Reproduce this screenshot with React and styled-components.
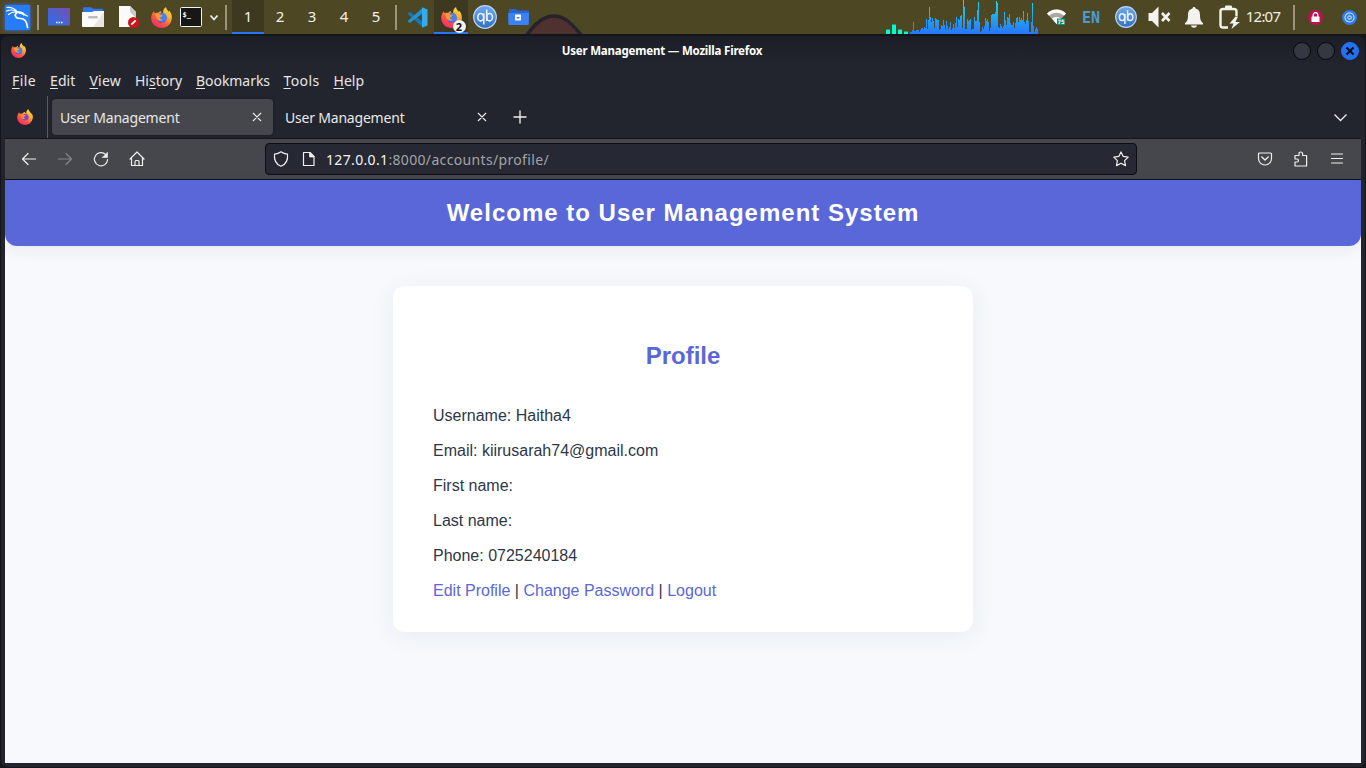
import React from "react";
import styled, { createGlobalStyle, css } from "styled-components";

const ui = `"Noto Sans", "Open Sans", sans-serif`;

const GlobalStyle = createGlobalStyle`
  * { box-sizing: border-box; }
  html, body { margin: 0; height: 100%; overflow: hidden; background: #14161c; }
  svg { display: block; flex: none; overflow: visible; }
`;

const Desktop = styled.div`
  width: 1366px;
  height: 768px;
  display: flex;
  flex-direction: column;
  background: #14151b;
  font-family: ${ui};
  overflow: hidden;
`;

/* ---------- desktop panel ---------- */

const Panel = styled.header`
  position: relative;
  height: 34px;
  flex: none;
  display: flex;
  align-items: stretch;
  overflow: hidden;
  background: #4e4724;
`;

const Wallpaper = styled.svg`
  position: absolute;
  left: 519px;
  top: 0;
`;

const Slot = styled.div`
  width: ${(p) => p.$w}px;
  flex: none;
  display: flex;
  align-items: center;
  justify-content: center;
  ${(p) =>
    p.$active &&
    css`
      background: #3d3820;
      box-shadow: inset 0 -2px #2777ff;
    `}
`;

const Rule = styled.i`
  width: 2px;
  height: 25px;
  background: #9b967f;
`;

const Workspace = styled(Slot)`
  color: #f2f0e8;
  font-size: 15px;
  padding-bottom: 2px;
`;

const Spacer = styled.div`
  flex: 1;
`;

const Language = styled.span`
  font: bold 15px "DejaVu Sans Mono", monospace;
  padding-top: 1px;
  color: #4a9ad4;
`;

const Clock = styled.span`
  font-size: 15px;
  letter-spacing: -0.8px;
  padding-bottom: 2px;
  color: #f2f0e8;
`;

/* ---------- browser window ---------- */

const Window = styled.main`
  width: 1364px;
  height: 731px;
  margin: 2px 0 0 1px;
  padding: 0 4px 4px;
  display: flex;
  flex-direction: column;
  background: #23252e;
  border-radius: 7px;
  overflow: hidden;
`;

const TitleBar = styled.div`
  height: 29px;
  flex: none;
  display: grid;
  grid-template-columns: 100px 1fr 100px;
  align-items: center;
  margin: 0 -4px;
  padding: 0 6px 0 10px;
  background: linear-gradient(#1c1e27, #23252e);
`;

const WindowTitle = styled.h1`
  margin: 0 46px 0 0;
  text-align: center;
  color: #fff;
  font-size: 11.5px;
  font-weight: 700;
  letter-spacing: -0.2px;
`;

const WindowButtons = styled.div`
  display: flex;
  justify-content: flex-end;
  gap: 6px;
`;

const WindowButton = styled.span`
  width: 18px;
  height: 18px;
  border-radius: 50%;
  border: 1px solid #07080a;
  background: ${(p) => (p.$close ? "#2371f3" : "#343843")};
  ${(p) => p.$close && "border-color: #2371f3;"}
  display: grid;
  place-items: center;
`;

const MenuBar = styled.nav`
  height: 31px;
  flex: none;
  display: flex;
  align-items: center;
  padding-left: 7px;
`;

const MenuItem = styled.span`
  width: ${(p) => p.$w}px;
  flex: none;
  white-space: nowrap;
  color: #e6e6e6;
  font-size: 14px;
  letter-spacing: ${(p) => p.$ls}px;
  u { text-underline-offset: 2px; }
`;

const TabStrip = styled.div`
  height: 43px;
  flex: none;
  display: flex;
  align-items: stretch;
  border-bottom: 1px solid #15161c;
`;

const PinnedTab = styled.div`
  width: 43px;
  border-right: 1px solid #5b5d64;
  display: flex;
  align-items: center;
  justify-content: center;
  padding: 0 2px 1px 0;
`;

const Tab = styled.div`
  width: 221px;
  height: 36px;
  margin: 3px 0 0 4px;
  padding: 0 11px 0 8px;
  display: flex;
  align-items: center;
  justify-content: space-between;
  border-radius: 4px;
  color: #e9e9e7;
  font-size: 14px;
  letter-spacing: -0.2px;
  background: ${(p) => (p.$active ? "#45474d" : "transparent")};
  box-shadow: ${(p) => (p.$active ? "0 0 3px rgba(0,0,0,.35)" : "none")};
`;

const TabButton = styled.div`
  width: ${(p) => p.$w || 40}px;
  display: flex;
  align-items: center;
  justify-content: center;
`;

const ToolBar = styled.div`
  height: 41px;
  flex: none;
  display: flex;
  align-items: center;
  background: #45474d;
  border-bottom: 1px solid #101116;
  padding-left: 6px;
`;

const ToolButton = styled.div`
  width: ${(p) => p.$w || 36}px;
  display: flex;
  justify-content: center;
`;

const AddressBar = styled.div`
  width: 872px;
  height: 32px;
  margin-left: 110px;
  padding: 0 7px;
  display: flex;
  align-items: center;
  background: #262833;
  border: 1px solid #0d0e12;
  border-radius: 4px;
`;

const Address = styled.span`
  flex: 1;
  color: #a3a4a8;
  font-size: 14px;
  letter-spacing: 0.34px;
  b { font-weight: 400; color: #f4f4f4; }
`;

const TrailingTools = styled.div`
  margin-left: auto;
  margin-right: 6px;
  display: flex;
`;

/* ---------- page ---------- */

const Page = styled.div`
  flex: 1;
  background: #f7f9fc;
  color: #2d3748;
  font: 16px "Liberation Sans", Arial, sans-serif;
`;

const Banner = styled.h1`
  height: 66px;
  margin: 0;
  display: flex;
  align-items: center;
  justify-content: center;
  background: #5a67d8;
  border-radius: 0 0 12px 12px;
  box-shadow: 0 4px 16px rgba(44, 62, 80, 0.07);
  color: #fff;
  font-size: 24px;
  letter-spacing: 1px;
`;

const Card = styled.section`
  width: 580px;
  height: 346px;
  margin: 40px auto 0;
  padding: 55px 40px 0;
  background: #fff;
  border-radius: 12px;
  box-shadow: 0 4px 24px rgba(44, 82, 130, 0.08);
`;

const CardTitle = styled.h2`
  margin: 0 0 28px;
  text-align: center;
  color: #5a67d8;
  font-size: 24px;
  line-height: 29px;
`;

const Field = styled.p`
  margin: 0;
  line-height: 35px;
`;

const Link = styled.span`
  color: #5a67d8;
`;

/* ---------- drawings ---------- */

const Firefox = ({ size }) => (
  <svg width={size} height={size} viewBox="0 0 24 24">
    <defs>
      <linearGradient id="fxBody" x1=".85" y1=".1" x2=".25" y2=".95">
        <stop offset="0" stopColor="#ffdf43" />
        <stop offset=".35" stopColor="#ffa42e" />
        <stop offset=".65" stopColor="#ff5a42" />
        <stop offset="1" stopColor="#f02c68" />
      </linearGradient>
    </defs>
    <path fill="url(#fxBody)" d="M3.4 4.8c.1 1 .4 1.800 1 2.400C5.500 6.600 7 6.500 8.100 6.900 9 5.500 10 4.800 11.500 4.500c-.5.800-.5 1.400-.3 1.900L14 7C13.500 4.300 14.500 1.500 17.200 0c.2 2.700 1.800 3.800 3.100 5.500.3-.4.300-.8.200-1.400C23 6.500 24 9.500 23.800 12.500 23.500 19 18.300 24 12 24S.2 19 .2 12.500c0-3 1.200-5.900 3.200-7.700z" />
    <circle cx="12.300" cy="12.500" r="5.600" fill="#6a4be0" />
    <path fill="#3f83f5" d="M8 10c2-3 6-4 8.600-1.800 2.200 2.200 1.700 6.300-.7 8.100-3 1.600-6.300.3-7.500-2.200z" />
    <path fill="#ff9a30" d="M4.500 8.500c2.300-1.800 4.800-1.200 6.500.4l2.300.5c-.3 1.500-1.800 2-3 2.300-.5 1.700 1 2.800 3 2.500-1.500 2-4.300 1.800-5.800.3-1.600-1.500-1.400-4-3-6z" />
  </svg>
);

const FirefoxNightTab = () => (
  <svg width="16" height="16" viewBox="0 0 24 24">
    <path fill="url(#fxBody)" d="M3.400 4.800c.1 1 .4 1.800 1 2.400C5.500 6.600 7 6.500 8.100 6.900 9 5.500 10 4.800 11.500 4.500L14 7C13.500 4.300 14.500 1.500 17.200 0c.2 2.700 1.800 3.800 3.100 5.500C23 7.500 24 9.500 23.800 12.500 23.500 19 18.300 24 12 24S.2 19 .2 12.500c0-3 1.200-5.900 3.200-7.700z" />
    <circle cx="12.500" cy="12.200" r="4.800" fill="#7a43df" />
    <path fill="#ff8b35" d="M5 8.500c2.300-1.800 4.800-1.200 6.500.4l1.800.5c-.3 1.500-1.800 2-3 2.300-.5 1.700 1 2.400 2.500 2.100-1.500 2-4 1.800-5.300.3C6 12.500 6.500 10.500 5 8.500z" />
  </svg>
);

const Kali = () => (
  <svg width="25" height="25" viewBox="0 0 25 25">
    <rect width="25" height="25" rx="1" fill="#267dfb" style={{ filter: "drop-shadow(0 0 2px #2a73ff)" }} />
    <g fill="none" stroke="#fff" strokeLinecap="round">
      <path d="M2 2.500c4.500-.3 8 1.300 10.500 4.500M1.500 6c4-1.500 8-1.300 11 1M3.500 9.500c2.500-2 5.500-2.700 8.500-2.500" strokeWidth="1.200" />
      <path d="M12 7.500c-3.500 2.500-1.500 6 3 6 4.500-.2 7 3 7.500 9" strokeWidth="1.700" />
      <path d="M12 7c3-.4 6 .3 7.500 2.500l2.800 1.500M14 8c2.500 0 4 .5 5 2" strokeWidth="1.400" />
    </g>
  </svg>
);

const DesktopIcon = () => (
  <svg width="22" height="18" viewBox="0 0 22 18">
    <defs>
      <linearGradient id="desk" x1="0" y1="1" x2="1" y2="0">
        <stop offset=".25" stopColor="#3a68e0" />
        <stop offset="1" stopColor="#7b4fae" />
      </linearGradient>
    </defs>
    <rect width="22" height="17.500" rx="1" fill="url(#desk)" />
    <path d="M8 14.500h1.500m1 0h1.500m1 0h1.500" stroke="#fff" strokeWidth="1.500" />
  </svg>
);

const Files = () => (
  <svg width="22" height="20" viewBox="0 0 22 20">
    <path d="M1 7V1.500Q1 .3 2 .3h7l2 1.500h9q1 0 1 1V7z" fill="#2f78ea" />
    <path d="M0 5h10l2-1h10v15q0 1-1 1H1q-1 0-1-1z" fill="#fbfbfb" />
    <path d="M22 5v14q0 1-1 1H11z" fill="#e6e6e6" />
    <rect x="6" y="9" width="10" height="2.500" rx="1.200" fill="#bdbdbd" />
  </svg>
);

const Editor = () => (
  <svg width="20" height="22" viewBox="0 0 20 22">
    <path d="M0 0h11l6 6v15H0z" fill="#fafafa" />
    <path d="M11 0l6 6v6l-6-6z" fill="#c9c9c9" />
    <circle cx="14.500" cy="16.500" r="5.500" fill="#d0141c" />
    <path d="M12.300 18.700l4.400-4.400" stroke="#fff" strokeWidth="1.800" />
  </svg>
);

const Terminal = () => (
  <svg width="22" height="20" viewBox="0 0 22 20">
    <rect x=".5" y=".5" width="21" height="19" rx="1" fill="#171717" stroke="#f2f2f2" />
    <text x="2.500" y="9.500" fill="#fff" fontFamily="DejaVu Sans Mono" fontWeight="700" fontSize="7">$_</text>
  </svg>
);

const Chevron = ({ w = 9, h = 5, stroke = 1.8, color = "#eee" }) => (
  <svg width={w} height={h} viewBox={`0 0 ${w} ${h}`}>
    <path d={`M.5 .5L${w / 2} ${h - 0.5}L${w - 0.5} .5`} fill="none" stroke={color} strokeWidth={stroke} />
  </svg>
);

const VsCode = () => (
  <svg width="21" height="21" viewBox="0 0 21 21">
    <path d="M.5 6.800L2.800 5 16 15v5.500z" fill="#1478bd" />
    <path d="M.5 14.200L2.800 16 16 6V.5z" fill="#2092d8" />
    <path d="M15 .3L20.500 2.500v16l-5.500 2.300z" fill="#35abec" />
  </svg>
);

const Torrent = ({ size }) => (
  <svg width={size} height={size} viewBox="0 0 24 24">
    <defs>
      <linearGradient id="qbt" x2="0" y2="1">
        <stop stopColor="#70aaf0" />
        <stop offset="1" stopColor="#326fc0" />
      </linearGradient>
    </defs>
    <circle cx="12" cy="12" r="11.300" fill="url(#qbt)" stroke="#bcd6f5" strokeWidth="1.200" />
    <g fill="none" stroke="#e7f1ff" strokeWidth="1.600">
      <ellipse cx="7.700" cy="12.200" rx="2.900" ry="3.700" />
      <path d="M10.800 8.500v11" />
      <path d="M13.700 4.500v11.500" />
      <ellipse cx="16.600" cy="12.200" rx="2.900" ry="3.700" />
    </g>
  </svg>
);

const BlueFolder = () => (
  <svg width="21" height="16" viewBox="0 0 21 16">
    <path d="M1 0h7l1.500 1.500H20q1 0 1 1V15q0 1-1 1H1.500q-1 0-1-1z" fill="#2866d8" />
    <path d="M0 4h21l-.5 11q0 1-1 1h-18q-1 0-1-1z" fill="#3b82f6" />
    <rect x="7" y="5.500" width="6" height="6" rx=".7" fill="#fff" />
    <path d="M8.700 8.700h2.800" stroke="#3b82f6" strokeWidth="1.500" />
  </svg>
);

const Count = styled.b`
  position: absolute;
  right: -4px;
  bottom: -5px;
  width: 13px;
  height: 13px;
  border-radius: 50%;
  background: #f4f4f4;
  color: #111;
  font-size: 11px;
  line-height: 13px;
  text-align: center;
`;

const Badged = styled.div`
  position: relative;
`;

const load = [
  2, 2, 4, 12, 3, 3, 4, 4, 4, 2, 4, 6, 6, 5, 7, 6, 15, 5, 14, 27, 17, 12, 16, 13, 6, 16, 15, 14, 14, 4, 5, 9, 8, 14,
  9, 5, 13, 8, 5, 7, 12, 4, 6, 10, 6, 11, 17, 7, 15, 14, 18, 19, 6, 34, 27, 5, 5, 15, 13, 14, 15, 4, 5, 5, 17, 13,
  13, 24, 32, 12, 2, 3, 7, 5, 8, 16, 13, 15, 12, 3, 6, 19, 20, 20, 20, 22, 33, 31, 7, 6, 10, 8, 6, 8, 22, 14, 9, 17,
  16, 20, 11, 9, 9, 12, 6, 11, 16, 17, 12, 17, 14, 16, 14, 23, 12, 10, 14, 21, 13, 2, 2, 12, 31, 8, 2, 5, 7, 5,
];

const LoadGraph = () => (
  <svg width="152" height="34" viewBox="0 0 152 34" shapeRendering="crispEdges">
    <defs>
      <linearGradient id="load" gradientUnits="userSpaceOnUse" x1="0" y1="0" x2="0" y2="34">
        <stop offset="0" stopColor="#12dcea" />
        <stop offset="1" stopColor="#2975ff" />
      </linearGradient>
    </defs>
    <path d="M0 30h4v4H0zM6 25h4v9H6zM12 30h4v4h-4zM18 32h4v2h-4z" fill="#00ffd0" />
    <path d="M0 29h4v1H0zM6 24h4v1H6zM12 29h4v1h-4zM18 31h4v1h-4z" fill="#2c9870" />
    <path fill="url(#load)" d={load.map((v, i) => `M${24 + i} 34v${-v}h1v${v}z`).join("")} />
  </svg>
);

const Wifi = () => (
  <svg width="20" height="17" viewBox="0 0 20 17">
    <path d="M0 4.500C5-.8 14-.8 19 4.500L9.500 15z" fill="#aaa99c" />
    <path d="M0 4.500C5-.8 14-.8 19 4.500l-2 2.200c-4.200-4-10.800-4-15 0zM5 9.500c2.500-2 6.500-2 9 0L9.500 15z" fill="#fbfbfb" />
    <rect x="10" y="9.500" width="8" height="6.500" fill="#148c72" />
    <text x="10.400" y="15" fill="#fff" fontFamily="DejaVu Sans Mono" fontWeight="700" fontSize="6">75</text>
  </svg>
);

const Muted = () => (
  <svg width="24" height="22" viewBox="0 0 24 22" fill="#f2f2ee">
    <path d="M1.500 7H5l6.500-6.500v21L5 15H1.500z" />
    <path d="M15 7l7.500 8m0-8L15 15" stroke="#f2f2ee" strokeWidth="2.600" />
  </svg>
);

const Bell = () => (
  <svg width="18" height="21" viewBox="0 0 18 21" fill="#f2f2ee">
    <path d="M9 0c1 0 1.500.7 1.500 1.500C14 2.300 15 5 15 8c0 5 1 6.500 3 8v1.500H0V16c2-1.500 3-3 3-8 0-3 1-5.700 4.500-6.500C7.500.7 8 0 9 0zM6 18.500h6c-.3 3-5.700 3-6 0z" />
  </svg>
);

const Battery = () => (
  <svg width="22" height="24" viewBox="0 0 22 24">
    <path d="M9 22.500H4q-2.500 0-2.500-2.500V6Q1.500 4 4 4h11q2.500 0 2.500 2.500V11" fill="none" stroke="#f2f2ee" strokeWidth="2.400" />
    <path d="M6 4V1.500Q6 .5 7 .5h5q1 0 1 1V4z" fill="#f2f2ee" />
    <path d="M16.500 11.500l-6 7h4l-2 5.500 8.500-7h-4.500l2.500-5.500z" fill="#f2f2ee" />
  </svg>
);

const Lock = () => (
  <svg width="15" height="15" viewBox="0 0 15 15">
    <circle cx="7.500" cy="7.500" r="7.500" fill="#bd1250" />
    <rect x="3.500" y="6.500" width="8" height="5.500" rx=".5" fill="#fff" />
    <path d="M5.200 7V5a2.300 2.300 0 014.600 0v2" fill="none" stroke="#fff" strokeWidth="1.300" />
  </svg>
);

const Target = () => (
  <svg width="15" height="15" viewBox="0 0 15 15">
    <circle cx="7.500" cy="7.500" r="7.500" fill="#2f7be8" />
    <circle cx="7.500" cy="7.500" r="4.500" fill="none" stroke="#cfe2ff" strokeWidth="1.100" />
    <rect x="5.800" y="6" width="3.400" height="3" rx="1" fill="none" stroke="#e5efff" />
  </svg>
);

const Glyph = ({ d, size = 16, color = "#f0f0ea", width = 1.2 }) => (
  <svg width={size} height={size} viewBox="0 0 16 16" fill="none" stroke={color} strokeWidth={width} strokeLinejoin="round" strokeLinecap="round">
    {d}
  </svg>
);

const CloseX = () => <Glyph size={10} width={1.700} d={<path d="M2 2l12 12m0-12L2 14" />} />;

const menu = [
  ["", "F", "ile", 38, 0.4],
  ["", "E", "dit", 39.5, 0.1],
  ["", "V", "iew", 45.5, 0.2],
  ["Hi", "s", "tory", 61, 0],
  ["", "B", "ookmarks", 87.5, -0.05],
  ["", "T", "ools", 50, 0.4],
  ["", "H", "elp", 50, 0],
];

export default function App() {
  return (
    <Desktop>
      <GlobalStyle />
      <Panel>
        <Wallpaper width="70" height="34" viewBox="0 0 70 34">
          <path d="M7 36C16 24 24 16 35 16s18 8 28 20z" fill="#4f3130" stroke="#28232a" strokeWidth="3.500" />
        </Wallpaper>
        <Slot $w={35}><Kali /></Slot>
        <Slot $w={6}><Rule /></Slot>
        <Slot $w={35}><DesktopIcon /></Slot>
        <Slot $w={34}><Files /></Slot>
        <Slot $w={37}><Editor /></Slot>
        <Slot $w={28}><Firefox size={21} /></Slot>
        <Slot $w={32}><Terminal /></Slot>
        <Slot $w={13}><Chevron w={8} h={5} /></Slot>
        <Slot $w={12}><Rule /></Slot>
        {[1, 2, 3, 4, 5].map((n) => (
          <Workspace key={n} $w={32} $active={n === 1}>{n}</Workspace>
        ))}
        <Slot $w={8}><Rule /></Slot>
        <Slot $w={34}><VsCode /></Slot>
        <Slot $w={34} $active>
          <Badged><Firefox size={21} /><Count>2</Count></Badged>
        </Slot>
        <Slot $w={34}><Torrent size={24} /></Slot>
        <Slot $w={33}><BlueFolder /></Slot>
        <Spacer />
        <LoadGraph />
        <Slot $w={38}><Wifi /></Slot>
        <Slot $w={30}><Language>EN</Language></Slot>
        <Slot $w={40}><Torrent size={22} /></Slot>
        <Slot $w={26}><Muted /></Slot>
        <Slot $w={44}><Bell /></Slot>
        <Slot $w={27}><Battery /></Slot>
        <Slot $w={40}><Clock>12:07</Clock></Slot>
        <Slot $w={22}><Rule /></Slot>
        <Slot $w={20}><Lock /></Slot>
        <Slot $w={7} />
        <Slot $w={34}><Target /></Slot>
      </Panel>

      <Window>
        <TitleBar>
          <Firefox size={15} />
          <WindowTitle>User Management — Mozilla Firefox</WindowTitle>
          <WindowButtons>
            <WindowButton />
            <WindowButton />
            <WindowButton $close>
              <svg width="8" height="8" viewBox="0 0 8 8">
                <path d="M.5.5l7 7m0-7l-7 7" stroke="#080b14" strokeWidth="2" />
              </svg>
            </WindowButton>
          </WindowButtons>
        </TitleBar>

        <MenuBar>
          {menu.map(([pre, key, post, w, ls]) => (
            <MenuItem key={key} $w={w} $ls={ls}>{pre}<u>{key}</u>{post}</MenuItem>
          ))}
        </MenuBar>

        <TabStrip>
          <PinnedTab><FirefoxNightTab /></PinnedTab>
          <Tab $active><span>User Management</span><CloseX /></Tab>
          <Tab><span>User Management</span><CloseX /></Tab>
          <TabButton $w={43}>
            <Glyph size={12} width={1.800} d={<path d="M8 0v16M0 8h16" />} />
          </TabButton>
          <Spacer />
          <TabButton $w={41}><Chevron w={13} h={7} stroke={1.3} /></TabButton>
        </TabStrip>

        <ToolBar>
          <ToolButton><Glyph d={<path d="M14.500 8H1.500M7 2.500L1.500 8 7 13.500" />} /></ToolButton>
          <ToolButton><Glyph color="#85868a" d={<path d="M1.500 8h13M9 2.500L14.500 8 9 13.500" />} /></ToolButton>
          <ToolButton>
            <Glyph d={<><path d="M14.600 8.500A6.600 6.600 0 1112.800 3.700" /><path d="M14.500 1.500v5h-5z" fill="#f0f0ea" strokeWidth=".6" /></>} />
          </ToolButton>
          <ToolButton>
            <Glyph d={<path d="M1 8l7-7 7 7M2.500 7v7.500h11V7M6 14.500V10.500q0-1 1-1h2q1 0 1 1v4" />} />
          </ToolButton>
          <AddressBar>
            <Glyph d={<path d="M8 .8C6 2.500 4 3.100 1.500 3.200 1 8 2.500 13 8 15.300 13.500 13 15 8 14.500 3.200 12 3.100 10 2.500 8 .8z" />} />
            <ToolButton $w={38}>
              <Glyph d={<><path d="M3.500 1.500h6.500l4 4v9H3.500z" /><path d="M9.500 1.500v4.500h4.500z" fill="#f0f0ea" strokeWidth=".7" /></>} />
            </ToolButton>
            <Address style={{ marginLeft: -1 }}><b>127.0.0.1</b>:8000/accounts/profile/</Address>
            <Glyph d={<path d="M8 .9l2.200 4.500 5 .7-3.600 3.500.9 5L8 12.300l-4.500 2.300.9-5L.8 6.100l5-.7z" />} />
          </AddressBar>
          <TrailingTools>
            <ToolButton>
              <Glyph d={<><path d="M2.500 2h11q1 0 1 1v4.500a6.500 6.500 0 01-13 0V3q0-1 1-1z" /><path d="M4.800 6L8 9l3.200-3" strokeWidth="1.400" /></>} />
            </ToolButton>
            <ToolButton>
              <Glyph d={<path d="M2 15V11h2q1.500 0 1.500-1.500T4 8H2V4.500h4V3q0-2 1.800-2T9.600 3v1.500h4V15z" />} />
            </ToolButton>
            <ToolButton><Glyph d={<path d="M2.500 3h11M2.500 7.500h11M2.500 12h11" />} /></ToolButton>
          </TrailingTools>
        </ToolBar>

        <Page>
          <Banner>Welcome to User Management System</Banner>
          <Card>
            <CardTitle>Profile</CardTitle>
            <Field>Username: Haitha4</Field>
            <Field>Email: kiirusarah74@gmail.com</Field>
            <Field>First name:</Field>
            <Field>Last name:</Field>
            <Field>Phone: 0725240184</Field>
            <Field>
              <Link>Edit Profile</Link> | <Link>Change Password</Link> | <Link>Logout</Link>
            </Field>
          </Card>
        </Page>
      </Window>
    </Desktop>
  );
}
